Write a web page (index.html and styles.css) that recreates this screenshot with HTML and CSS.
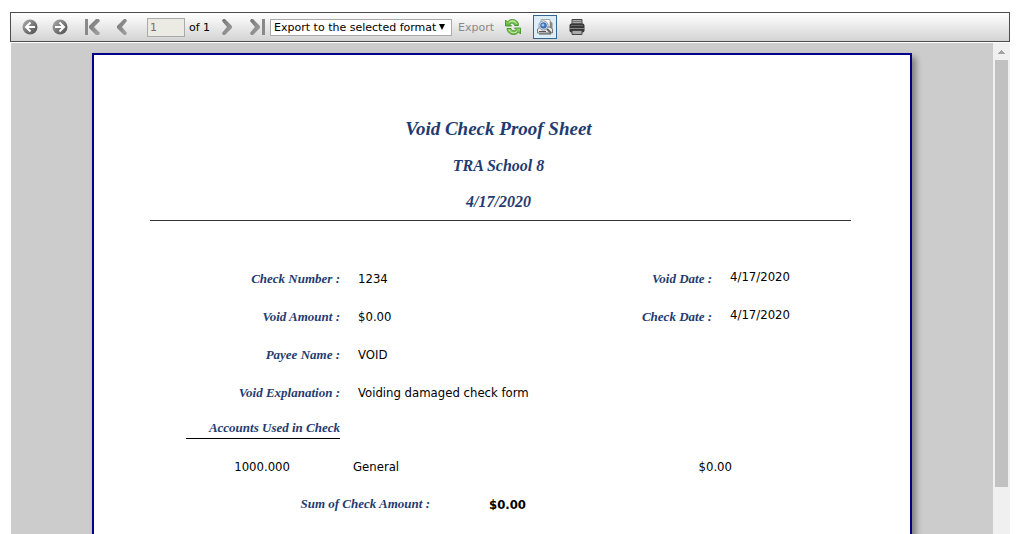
FILE: index.html
```html
<!DOCTYPE html>
<html lang="en">
<head>
  <meta charset="UTF-8">
  <meta name="viewport" content="width=device-width, initial-scale=1.0">
  <title>Void Check Proof Sheet</title>
  <link rel="stylesheet" href="styles.css">
</head>
<body>
  <!-- Shared gradients for the toolbar icons -->
  <svg class="defs" aria-hidden="true">
    <defs>
      <linearGradient id="ball" x1="0" y1="0" x2="1" y2="1">
        <stop offset="0" stop-color="#b0b0b0"/>
        <stop offset="0.5" stop-color="#7a7a7a"/>
        <stop offset="1" stop-color="#4c4c4c"/>
      </linearGradient>
      <linearGradient id="chevron" x1="0" y1="0" x2="1" y2="1">
        <stop offset="0" stop-color="#747474"/>
        <stop offset="1" stop-color="#a4a4a4"/>
      </linearGradient>
      <linearGradient id="green" x1="0" y1="0" x2="0" y2="1">
        <stop offset="0" stop-color="#9ad874"/>
        <stop offset="1" stop-color="#5cb03a"/>
      </linearGradient>
    </defs>
  </svg>

  <div class="toolbar">
    <div class="group">
      <button class="icon-button" type="button" aria-label="Back">
        <svg width="16" height="16" viewBox="0 0 16 16">
          <circle cx="8" cy="8" r="7.5" fill="url(#ball)"/>
          <path d="M13 8H5M8.500 3.500L4 8L8.500 12.500" fill="none" stroke="#fff" stroke-width="2"/>
        </svg>
      </button>
      <button class="icon-button" type="button" aria-label="Forward">
        <svg width="16" height="16" viewBox="0 0 16 16">
          <circle cx="8" cy="8" r="7.5" fill="url(#ball)"/>
          <path d="M3 8H11M7.500 3.500L12 8L7.500 12.500" fill="none" stroke="#fff" stroke-width="2"/>
        </svg>
      </button>
    </div>

    <div class="group group-prev">
      <button class="icon-button" type="button" aria-label="First page">
        <svg width="16" height="16" viewBox="0 0 16 16">
          <path d="M1 0H4V16H1Z" fill="#8a8a8a"/>
          <path d="M12 0H15L16 2L10 8L16 14L15 16H12L5 9V7Z" fill="url(#chevron)"/>
        </svg>
      </button>
      <button class="icon-button" type="button" aria-label="Previous page">
        <svg width="16" height="16" viewBox="0 0 16 16">
          <path d="M10 0H12L13 2L8 8L13 14L12 16H10L3 9V7Z" fill="url(#chevron)"/>
        </svg>
      </button>
    </div>

    <div class="pager">
      <input class="page-number" id="page" type="text" value="1" aria-label="Page" disabled>
      <label for="page">of 1</label>
    </div>

    <div class="group group-next">
      <button class="icon-button" type="button" aria-label="Next page">
        <svg width="16" height="16" viewBox="0 0 16 16">
          <path d="M6 0H4L3 2L8 8L3 14L4 16H6L13 9V7Z" fill="url(#chevron)"/>
        </svg>
      </button>
      <button class="icon-button" type="button" aria-label="Last page">
        <svg width="16" height="16" viewBox="0 0 16 16">
          <path d="M4 0H2L1 2L6 8L1 14L2 16H4L11 9V7Z" fill="url(#chevron)"/>
          <path d="M13 0H16V16H13Z" fill="#8a8a8a"/>
        </svg>
      </button>
    </div>

    <div class="export">
      <select class="export-format" aria-label="Export format">
        <option>Export to the selected format</option>
      </select>
      <a class="export-link" href="#">Export</a>
    </div>

    <div class="group group-tools">
      <button class="icon-button" type="button" aria-label="Refresh">
        <svg width="16" height="16" viewBox="0 0 16 16">
          <path d="M0.500 1V7H6.500L4.500 5C6.500 3.500 9 4 9.500 6.500H13.500C13.500 2.500 10.500 0.500 7.500 0.500C5 0.500 3.500 1.500 2.500 3Z" fill="url(#green)" stroke="#4b9a30"/>
          <path d="M15.500 15V9H9.500L11.500 11C9.500 12.500 6.500 12 6 9.500H2C2.500 13.500 5.500 15.500 8.500 15.500C11 15.500 12.500 14.500 13.500 13Z" fill="url(#green)" stroke="#4b9a30"/>
          <path d="M4 3.500C6 1.500 9.500 1.500 11.500 4.500M4 11C5.500 14 9.500 14.500 12 12.500" fill="none" stroke="#d4f3bd"/>
        </svg>
      </button>
      <button class="icon-button selected" type="button" aria-label="Print preview">
        <svg width="16" height="16" viewBox="0 0 16 16">
          <path d="M4 0.500H13V9H4Z" fill="#fff" stroke="#aaa"/>
          <path d="M13 2L15.500 4V12H13Z" fill="#888"/>
          <path d="M0.500 10L3 8H13L15.500 10V14H0.500Z" fill="#e8e8e8" stroke="#777"/>
          <path d="M2 12.500H9M2 15H14" stroke="#555"/>
          <circle cx="6.500" cy="6.500" r="4.600" fill="#f4f8fc" stroke="#8a9099"/>
          <circle cx="6.500" cy="6.500" r="3.300" fill="#3c70b4"/>
          <circle cx="6" cy="6" r="1.500" fill="#9cc5ea"/>
          <path d="M10 10L14 14" stroke="#666" stroke-width="2"/>
        </svg>
      </button>
      <button class="icon-button" type="button" aria-label="Print">
        <svg width="16" height="16" viewBox="0 0 16 16">
          <path d="M3 0.500H13V5H3Z" fill="#aaa" stroke="#444"/>
          <path d="M4 2.500H12" stroke="#777"/>
          <rect x="0.500" y="4.500" width="15" height="9" rx="2" fill="#383838"/>
          <path d="M2 6.500H14" stroke="#666"/>
          <path d="M1 9.500H15" stroke="#888"/>
          <path d="M3 11.500H13V15.500H3Z" fill="#aaa" stroke="#444"/>
        </svg>
      </button>
    </div>
  </div>

  <div class="viewer">
    <div class="canvas">
      <main class="sheet">
        <header class="sheet-header">
          <h1>Void Check Proof Sheet</h1>
          <h2>TRA School 8</h2>
          <h2>4/17/2020</h2>
        </header>

        <dl class="fields">
          <dt>Check Number :</dt>
          <dd>1234</dd>
          <dt>Void Date :</dt>
          <dd class="date">4/17/2020</dd>
          <dt>Void Amount :</dt>
          <dd>$0.00</dd>
          <dt>Check Date :</dt>
          <dd class="date">4/17/2020</dd>
          <dt>Payee Name :</dt>
          <dd class="wide">VOID</dd>
          <dt>Void Explanation :</dt>
          <dd class="wide">Voiding damaged check form</dd>
        </dl>

        <h3 class="accounts-title">Accounts Used in Check</h3>
        <table class="accounts">
          <colgroup>
            <col class="col-account">
            <col class="col-name">
            <col class="col-sum">
            <col class="col-amount">
            <col>
          </colgroup>
          <tbody>
            <tr>
              <td class="number">1000.000</td>
              <td class="name">General</td>
              <td></td>
              <td class="number">$0.00</td>
              <td></td>
            </tr>
          </tbody>
          <tfoot>
            <tr>
              <th colspan="2">Sum of Check Amount :</th>
              <td class="number total">$0.00</td>
              <td colspan="2"></td>
            </tr>
          </tfoot>
        </table>
      </main>
    </div>

    <div class="scrollbar" aria-hidden="true">
      <svg class="scroll-arrow" width="7" height="4" viewBox="0 0 7 4">
        <path d="M3 0H4V1H5V2H6V3H7V4H0V3H1V2H2V1H3Z" fill="#a3a3a3"/>
      </svg>
      <div class="scroll-thumb"></div>
    </div>
  </div>
</body>
</html>
```
FILE: styles.css
```css
* {
  box-sizing: border-box;
}

body {
  display: flex;
  flex-direction: column;
  height: 100vh;
  margin: 0;
  padding: 12px 14px 0 10px;
  overflow: hidden;
  background-color: white;
  color: black;
  font-family: "DejaVu Sans Condensed", "DejaVu Sans", Tahoma, sans-serif;
  font-size: 13px;
}

.defs {
  position: absolute;
  width: 0;
  height: 0;
}

/* Toolbar */
.toolbar {
  display: flex;
  align-items: center;
  gap: 1px;
  height: 30px;
  padding: 0 7px;
  border: 1px solid #4c4c4c;
  background: linear-gradient(white, #d3d3d3);
  font-family: "DejaVu Sans", Verdana, sans-serif;
  font-size: 11px;
}

.group {
  display: flex;
  align-items: center;
  gap: 6px;
}

.group-prev {
  margin-left: 7px;
}

.group-next {
  margin-left: 4px;
}

.group-tools {
  gap: 8px;
  margin-left: 6px;
}

.icon-button {
  display: flex;
  align-items: center;
  justify-content: center;
  width: 24px;
  height: 24px;
  padding: 0;
  border: 1px solid transparent;
  background: none;
  cursor: pointer;
}

.selected {
  border-color: #336699;
  background-color: #ddeef7;
}

.pager {
  display: flex;
  align-items: center;
  gap: 4px;
  margin-left: 12px;
}

.page-number {
  width: 38px;
  height: 19px;
  padding: 0 2px;
  border: 1px solid #aaa;
  background-color: #ebebe4;
  color: #876b54;
  font: inherit;
}

.export {
  display: flex;
  align-items: center;
  gap: 6px;
}

.export-format {
  width: 182px;
  height: 17px;
  padding: 0 12px 0 3px;
  border: 1px solid #a9a9a9;
  appearance: none;
  background: white;
  background-image: url("data:image/svg+xml,%3Csvg xmlns='http://www.w3.org/2000/svg' width='6' height='6'%3E%3Cpath d='M0 0H6L3 6Z'/%3E%3C/svg%3E");
  background-repeat: no-repeat;
  background-position: right 6px top 4px;
  color: black;
  font: inherit;
}

.export-link {
  color: #8a8a8a;
  text-decoration: none;
}

/* Report area */
.viewer {
  display: flex;
  flex: 1;
  min-height: 0;
  margin: 1px 0 0 1px;
  background-color: #ccc;
}

.canvas {
  flex: 1;
  padding: 10px 20px 0;
  overflow: hidden;
}

.sheet {
  max-width: 820px;
  min-height: 1060px;
  margin: 0 auto;
  padding: 55px 59px 0 56px;
  border: 2px solid darkblue;
  background-color: white;
  box-shadow: 4px 4px 6px #808080;
}

.sheet-header {
  padding-right: 4px;
  border-bottom: 1px solid #333;
  text-align: center;
}

h1,
h2,
h3,
dt,
th {
  margin: 0;
  color: #1f3c70;
  font-family: "Liberation Serif", "Times New Roman", serif;
  font-style: italic;
  font-weight: bold;
}

h1 {
  font-size: 19px;
  line-height: 38px;
}

h2 {
  font-size: 16px;
  line-height: 36px;
}

.fields {
  display: grid;
  grid-template-columns: 190px 1fr 100px 121px;
  column-gap: 18px;
  margin: 39px 0 0;
  line-height: 38px;
}

dt {
  font-size: 13px;
  text-align: right;
}

dd {
  margin: 0;
}

.date {
  line-height: 34px;
}

.wide {
  grid-column: span 3;
}

.accounts-title {
  width: 154px;
  margin: 5px 0 8px 36px;
  border-bottom: 1px solid black;
  font-size: 13px;
  line-height: 21px;
  text-align: right;
}

.accounts {
  width: 100%;
  border-collapse: collapse;
  table-layout: fixed;
}

.accounts td,
.accounts th {
  height: 38px;
  padding: 0;
}

.accounts th {
  font-size: 13px;
  text-align: right;
}

.col-account,
.col-name {
  width: 140px;
}

.col-sum {
  width: 96px;
}

.col-amount {
  width: 206px;
}

.accounts .name {
  padding-left: 63px;
}

.number {
  text-align: right;
}

.total {
  font-weight: bold;
}

/* Scrollbar */
.scrollbar {
  display: flex;
  flex-direction: column;
  align-items: center;
  width: 17px;
  background-color: #f0f0f0;
}

.scroll-arrow {
  margin: 7px 0 6px;
}

.scroll-thumb {
  width: 13px;
  height: 87%;
  background-color: #c1c1c1;
}
```
